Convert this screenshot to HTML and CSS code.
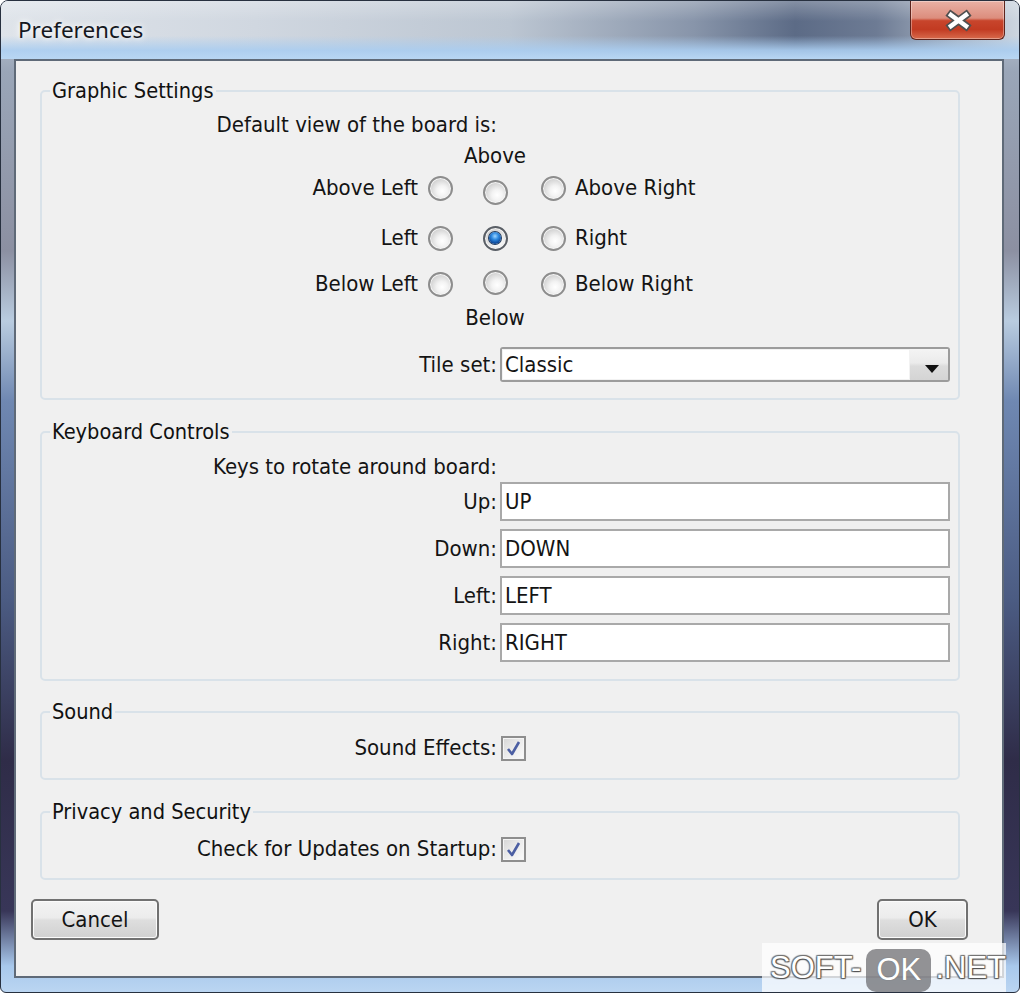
FILE: index.html
```html
<!DOCTYPE html>
<html lang="en">
<head>
<meta charset="utf-8">
<title>Preferences</title>
<link rel="stylesheet" href="styles.css">
</head>
<body>
<div class="window">
  <div class="titlebar">
    <span class="title">Preferences</span>
    <div class="close">
      <svg width="95" height="39" viewBox="0 0 95 39">
        <path d="M41 15 L56 26 M56 15 L41 26" stroke="#505050" stroke-width="8" stroke-linecap="square" fill="none"/>
        <path d="M41 15 L56 26 M56 15 L41 26" stroke="#ffffff" stroke-width="4.5" stroke-linecap="square" fill="none"/>
      </svg>
    </div>
  </div>
  <div class="client">
    <fieldset class="group g-graphic">
      <legend>Graphic Settings</legend>
      <div class="pair cap"><span class="lbl">Default view of the board is:</span></div>
      <div class="dir">
        <span></span><span></span><span class="mid-text">Above</span><span></span><span></span>

        <span class="l">Above Left</span>
        <span class="radio"></span>
        <span class="radio low"></span>
        <span class="radio"></span>
        <span class="r">Above Right</span>

        <span class="l">Left</span>
        <span class="radio"></span>
        <span class="radio on"></span>
        <span class="radio"></span>
        <span class="r">Right</span>

        <span class="l">Below Left</span>
        <span class="radio"></span>
        <span class="radio high"></span>
        <span class="radio"></span>
        <span class="r">Below Right</span>

        <span></span><span></span><span class="mid-text">Below</span><span></span><span></span>
      </div>
      <div class="pair tile">
        <span class="lbl">Tile set:</span>
        <div class="combo">
          <span class="combo-val">Classic</span>
          <span class="combo-drop"><svg width="14" height="8" viewBox="0 0 14 8"><path d="M0 0 H14 L7 8 Z" fill="#111"/></svg></span>
        </div>
      </div>
    </fieldset>

    <fieldset class="group g-keys">
      <legend>Keyboard Controls</legend>
      <div class="pair cap"><span class="lbl">Keys to rotate around board:</span></div>
      <div class="fields">
        <span class="lbl">Up:</span><div class="field">UP</div>
        <span class="lbl">Down:</span><div class="field">DOWN</div>
        <span class="lbl">Left:</span><div class="field">LEFT</div>
        <span class="lbl">Right:</span><div class="field">RIGHT</div>
      </div>
    </fieldset>

    <fieldset class="group g-sound">
      <legend>Sound</legend>
      <div class="pair chk">
        <span class="lbl">Sound Effects:</span>
        <span class="check"><svg width="21" height="21" viewBox="0 0 21 21"><path d="M5 11 L9 16 L16 4" stroke="#4c5fa3" stroke-width="2.6" fill="none" stroke-linejoin="round"/></svg></span>
      </div>
    </fieldset>

    <fieldset class="group g-privacy">
      <legend>Privacy and Security</legend>
      <div class="pair chk">
        <span class="lbl">Check for Updates on Startup:</span>
        <span class="check"><svg width="21" height="21" viewBox="0 0 21 21"><path d="M5 11 L9 16 L16 4" stroke="#4c5fa3" stroke-width="2.6" fill="none" stroke-linejoin="round"/></svg></span>
      </div>
    </fieldset>

    <div class="buttons">
      <button class="btn btn-cancel">Cancel</button>
      <button class="btn btn-ok">OK</button>
    </div>
  </div>
  <div class="wm"><span class="wm-t">SOFT-</span><span class="wm-ok">OK</span><span class="wm-t">.NET</span></div>
</div>
</body>
</html>
```

FILE: styles.css
```css
html, body {
  margin: 0;
  padding: 0;
  background: #ffffff;
}
body {
  width: 1020px;
  height: 993px;
  overflow: hidden;
}
.window {
  position: relative;
  width: 1020px;
  height: 993px;
  box-sizing: border-box;
  border: 1px solid #27303f;
  border-radius: 8px 8px 6px 6px;
  overflow: hidden;
  display: flex;
  flex-direction: column;
  background: linear-gradient(180deg,
    #c9d3df 0px, #9aa6b8 70px, #8c90a2 250px, #b9cce0 320px,
    #6f88b2 400px, #4b5b82 600px, #2f2c48 760px, #383658 910px,
    #a8c8ec 965px, #bcd6f2 993px);
}
.titlebar {
  flex: none;
  height: 58px;
  display: flex;
  justify-content: space-between;
  align-items: flex-start;
  background:
    linear-gradient(180deg, rgba(255,255,255,0.25) 0, rgba(255,255,255,0) 35%, rgba(170,205,240,0) 60%, rgba(170,205,240,0.9) 85%, rgba(184,214,243,1) 100%),
    linear-gradient(90deg, #dfe4ea 0%, #d0d7e0 25%, #bcc6d2 50%, #8895aa 68%, #5c6b86 78%, #6d7b94 86%, #a9b4c3 94%, #cdd6e0 100%);
}
.title {
  margin: 14px 0 0 17px;
  font-family: "Noto Sans", "Open Sans", sans-serif;
  font-size: 22.5px;
  line-height: 30px;
  color: #15181f;
  text-shadow: 0 0 10px rgba(255,255,255,0.95), 0 0 5px rgba(255,255,255,0.9);
}
.close {
  width: 95px;
  height: 39px;
  margin-right: 14px;
  box-sizing: border-box;
  border: 1px solid #5e241c;
  border-top: none;
  border-radius: 0 0 6px 6px;
  background: linear-gradient(180deg, #e9b1a5 0%, #dc8d7d 45%, #c8452c 52%, #c23b22 75%, #d86a4c 100%);
  box-shadow: inset 0 0 0 1px rgba(255,255,255,0.35);
}
.close svg { display: block; margin: -1px 0 0 -1px; }

.client {
  flex: none;
  height: 919px;
  margin: 0 15px 0 13px;
  box-sizing: border-box;
  border: 2px solid #5f6a78;
  background: #f0f0f0;
  padding: 17px 42px 0 24px;
  font-family: "DejaVu Sans Condensed", "DejaVu Sans", sans-serif;
  font-size: 22px;
  line-height: 26px;
  color: #141414;
}

.group {
  margin: 0;
  border: 2px solid #d9e2e9;
  border-radius: 5px;
  padding: 0 8px 0 0;
  min-width: 0;
}
.group legend {
  margin-left: 8px;
  padding: 0 2px;
  font-size: 21.6px;
  line-height: 26px;
  color: #111;
}
.g-graphic { padding-top: 6px; padding-bottom: 9px; }
.g-keys { margin-top: 19px; padding-top: 7px; padding-bottom: 17px; }
.g-sound { margin-top: 18px; padding-top: 10px; padding-bottom: 18px; }
.g-privacy { margin-top: 19px; padding-top: 11px; padding-bottom: 17px; }

.pair {
  display: grid;
  grid-template-columns: 1fr 450px;
  column-gap: 3px;
  align-items: center;
}
.lbl { text-align: right; white-space: nowrap; }
.cap { height: 30px; }
.tile { height: 49px; }
.chk { height: 25px; }

.dir {
  display: grid;
  grid-template-columns: 380px 36px 74px 42px 1fr;
  grid-template-rows: 32px 32px 68px 24px 44px;
  align-items: center;
  white-space: nowrap;
}
.dir .l { text-align: right; padding-right: 4px; }
.dir .r { padding-left: 1px; }
.mid-text { justify-self: center; }

.radio {
  justify-self: center;
  position: relative;
  width: 25px;
  height: 25px;
  box-sizing: border-box;
  border-radius: 50%;
  border: 2px solid #8d8d8d;
  background: radial-gradient(circle at 58% 62%, #ffffff 0, #f3f3f3 30%, #cfcfcf 72%, #e9e9e9 100%);
  box-shadow: inset 0 0 0 1px #f6f6f6;
}
.radio.low { margin-top: 8px; }
.radio.high { margin-bottom: 4px; }
.radio.on { border-color: #5a5f66; }
.radio.on::after {
  content: "";
  position: absolute;
  left: 4.5px;
  top: 4.5px;
  width: 12px;
  height: 12px;
  border-radius: 50%;
  background: radial-gradient(circle at 50% 35%, #9fd6ff 0, #2f8ae0 35%, #0e4b9c 70%, #0a3370 100%);
  box-shadow: 0 0 0 1px #203a5c;
}

.combo {
  height: 35px;
  box-sizing: border-box;
  border: 2px solid #9c9c9c;
  border-radius: 3px;
  display: flex;
  background: #fff;
}
.combo-val {
  flex: 1;
  padding-left: 3px;
  line-height: 31px;
  background: #ffffff;
  box-shadow: inset 0 0 0 1px #f2f2f2;
}
.combo-drop {
  width: 38px;
  display: flex;
  align-items: center;
  justify-content: center;
  background: linear-gradient(180deg, #f4f4f4 0%, #ebebeb 45%, #dcdcdc 55%, #d4d4d4 100%);
}
.combo-drop svg { display: block; margin: 8px 0 0 6px; }

.fields {
  display: grid;
  grid-template-columns: 1fr 450px;
  grid-auto-rows: 39px;
  row-gap: 8px;
  column-gap: 3px;
  align-items: center;
}
.field {
  height: 39px;
  box-sizing: border-box;
  border: 2px solid #a9a9a9;
  background: #ffffff;
  padding-left: 3px;
  line-height: 35px;
}

.check {
  margin-left: 1px;
  width: 25px;
  height: 25px;
  box-sizing: border-box;
  border: 2px solid #8e8e8e;
  background: linear-gradient(135deg, #d6d6d6 0%, #ececec 50%, #fbfbfb 100%);
  box-shadow: inset 0 0 0 1px #f5f5f5;
}
.check svg { display: block; }

.buttons {
  display: flex;
  justify-content: space-between;
  margin: 19px -8px 0 -9px;
}
.btn {
  height: 41px;
  box-sizing: border-box;
  border: 2px solid #717171;
  border-radius: 5px;
  background: linear-gradient(180deg, #f3f3f3 0%, #ececec 45%, #dedede 52%, #d0d0d0 100%);
  box-shadow: inset 0 0 0 1px #fbfbfb;
  font-family: inherit;
  font-size: 22px;
  line-height: 26px;
  color: #141414;
  padding: 0;
}
.btn-cancel { width: 128px; }
.btn-ok { width: 91px; }

.wm {
  position: absolute;
  left: 761px;
  top: 942px;
  width: 244px;
  height: 50px;
  box-sizing: border-box;
  padding-left: 8px;
  display: flex;
  align-items: center;
  background: rgba(255,255,255,0.72);
  font-family: "Liberation Sans", Arial, sans-serif;
  font-size: 31px;
  line-height: 36px;
  color: #ffffff;
}
.wm-t {
  text-shadow: 0 0 1px #4a4a4a, 1px 1px 1px #555, -1px -1px 1px #7a7a7a, 1px -1px 1px #666, -1px 1px 1px #666;
}
.wm-ok {
  margin: 4px 4px 0 5px;
  width: 71px;
  height: 43px;
  border-radius: 10px;
  background: rgba(105,105,110,0.72);
  display: flex;
  align-items: center;
  justify-content: center;
  text-shadow: 0 0 1px #666;
}
```
